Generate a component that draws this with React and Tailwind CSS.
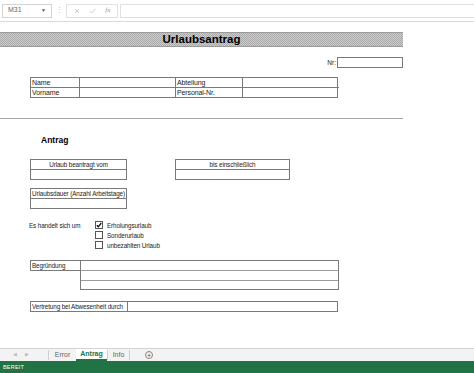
import React from "react";

const cellTxt = "text-[6.3px] leading-[9px] text-[#222] tracking-[-0.1px]";

function Box({ w, label, center = true }) {
  return (
    <div className="border border-[#7a7a7a] flex flex-col" style={{ width: w }}>
      <div className={`h-[10px] border-b border-[#7a7a7a] flex items-center ${center ? "justify-center" : "pl-[1px]"} ${cellTxt} whitespace-nowrap overflow-hidden`}>
        {label}
      </div>
      <div className="h-[9px]" />
    </div>
  );
}

function Check({ checked, label }) {
  return (
    <div className="h-[10px] flex items-center gap-[4px]">
      <div className="w-[8px] h-[8px] border border-[#555] bg-white flex items-center justify-center">
        {checked && (
          <svg width="6" height="6" viewBox="0 0 6 6">
            <path d="M0.8 3.2 L2.3 4.8 L5.3 1" fill="none" stroke="#111" strokeWidth="1.3" />
          </svg>
        )}
      </div>
      <span className={cellTxt}>{label}</span>
    </div>
  );
}

export default function App() {
  return (
    <div className="w-[474px] h-[373px] flex flex-col overflow-hidden bg-white font-['Liberation_Sans',Arial,sans-serif]">
      {/* formula bar */}
      <div className="h-[22px] flex items-center border-b border-[#d9d9d9] shrink-0">
        <div className="ml-[2px] w-[50px] h-[14px] border border-[#d4d4d4] flex items-center justify-between px-[5px]">
          <span className="text-[7px] text-[#666]">M31</span>
          <span className="text-[5px] text-[#555]">▼</span>
        </div>
        <div className="w-[14px] flex justify-center text-[7px] text-[#bbb]">⋮</div>
        <div className="w-[52px] h-[14px] border border-[#e0e0e0] flex items-center justify-around px-[2px]">
          <svg width="6" height="6" viewBox="0 0 6 6">
            <path d="M1 1 L5 5 M5 1 L1 5" stroke="#c4c4c4" strokeWidth="0.9" />
          </svg>
          <svg width="7" height="6" viewBox="0 0 7 6">
            <path d="M0.8 3.2 L2.6 5 L6.4 0.8" fill="none" stroke="#c4c4c4" strokeWidth="0.9" />
          </svg>
          <span className="text-[7px] italic text-[#999] font-['Liberation_Serif',serif]">fx</span>
        </div>
        <div className="ml-[2px] flex-1 h-[14px] border border-[#e0e0e0] border-r-0" />
      </div>

      {/* sheet */}
      <div className="flex-1 flex flex-col">
        {/* title */}
        <div className="mt-[10px] w-[403px] h-[15px] border-y border-[#9a9a9a] bg-[repeating-conic-gradient(#acacac_0_25%,#cacaca_0_50%)] bg-[length:2px_2px] flex items-center justify-center">
          <span className="text-[11.5px] font-bold text-black leading-none">Urlaubsantrag</span>
        </div>

        {/* Nr */}
        <div className="mt-[10px] w-[403px] h-[11px] flex justify-end items-center gap-[1px]">
          <span className="text-[6.5px] text-[#222]">Nr:</span>
          <div className="w-[66px] h-[11px] border border-[#7a7a7a]" />
        </div>

        {/* Name table */}
        <div className="mt-[9px] ml-[30px] w-[308px] border border-[#7a7a7a] grid grid-cols-[49px_96px_67px_96px]">
          <div className={`h-[10px] border-r border-b border-[#7a7a7a] pl-[1px] !text-[7px] ${cellTxt}`}>Name</div>
          <div className="h-[10px] border-r border-b border-[#7a7a7a]" />
          <div className={`h-[10px] border-r border-b border-[#7a7a7a] pl-[1px] !text-[7px] ${cellTxt}`}>Abteilung</div>
          <div className="h-[10px] border-b border-[#7a7a7a]" />
          <div className={`h-[9px] border-r border-[#7a7a7a] pl-[1px] !text-[7px] ${cellTxt}`}>Vorname</div>
          <div className="h-[9px] border-r border-[#7a7a7a]" />
          <div className={`h-[9px] border-r border-[#7a7a7a] pl-[1px] !text-[7px] ${cellTxt}`}>Personal-Nr.</div>
          <div className="h-[9px]" />
        </div>

        {/* divider */}
        <div className="mt-[20px] w-[403px] h-px bg-[#a6a6a6]" />

        {/* Antrag */}
        <div className="mt-[16px] ml-[41px] h-[10px] flex items-center">
          <span className="text-[8.5px] font-bold text-black">Antrag</span>
        </div>

        {/* date boxes */}
        <div className="mt-[14px] ml-[30px] flex gap-[48px]">
          <Box w={97} label="Urlaub beantragt vom" />
          <Box w={115} label="bis einschließlich" />
        </div>

        <div className="mt-[8px] ml-[30px] flex">
          <Box w={97} label="Urlaubsdauer (Anzahl Arbeitstage)" />
        </div>

        {/* checks */}
        <div className="mt-[11px] ml-[29px] flex">
          <div className="w-[66px] h-[10px] flex items-center">
            <span className={cellTxt}>Es handelt sich um</span>
          </div>
          <div className="flex flex-col">
            <Check checked label="Erholungsurlaub" />
            <Check label="Sonderurlaub" />
            <Check label="unbezahlten Urlaub" />
          </div>
        </div>

        {/* Begründung */}
        <div className="mt-[10px] ml-[30px] flex">
          <div className={`w-[50px] h-[11px] border border-r-0 border-[#7a7a7a] pl-[1px] ${cellTxt}`}>Begründung</div>
          <div className="w-[259px] border border-[#7a7a7a] flex flex-col">
            <div className="h-[10px] border-b border-[#9a9a9a]" />
            <div className="h-[10px] border-b border-[#9a9a9a]" />
            <div className="h-[8px]" />
          </div>
        </div>

        {/* Vertretung */}
        <div className="mt-[11px] ml-[30px] w-[308px] h-[11px] border border-[#7a7a7a] flex">
          <div className={`w-[97px] border-r border-[#7a7a7a] pl-[1px] whitespace-nowrap overflow-hidden ${cellTxt}`}>Vertretung bei Abwesenheit durch</div>
          <div className="flex-1" />
        </div>
      </div>

      {/* tab bar */}
      <div className="h-[13px] shrink-0 border-t border-[#d4d4d4] bg-[#f3f3f3] flex items-stretch text-[7px] text-[#666]">
        <div className="w-[48px] flex items-center gap-[8px] pl-[13px] text-[#bbb] text-[5px]">
          <span>◀</span>
          <span>▶</span>
        </div>
        <div className="w-px bg-[#d0d0d0] my-[1px]" />
        <div className="w-[27px] flex items-center justify-center">Error</div>
        <div className="w-[31px] flex items-center justify-center bg-white border-b-[2px] border-[#217346] text-[#217346] font-bold">Antrag</div>
        <div className="w-px bg-[#d0d0d0] my-[1px]" />
        <div className="w-[21px] flex items-center justify-center">Info</div>
        <div className="w-px bg-[#d0d0d0] my-[1px]" />
        <div className="ml-[15px] flex items-center">
          <div className="w-[8px] h-[8px] rounded-full border border-[#888] flex items-center justify-center text-[7px] leading-none text-[#555]">+</div>
        </div>
      </div>

      {/* status bar */}
      <div className="h-[12px] shrink-0 bg-[#217346] flex items-center pl-[3px]">
        <span className="text-[5.5px] text-white tracking-[0.2px]">BEREIT</span>
      </div>
    </div>
  );
}
